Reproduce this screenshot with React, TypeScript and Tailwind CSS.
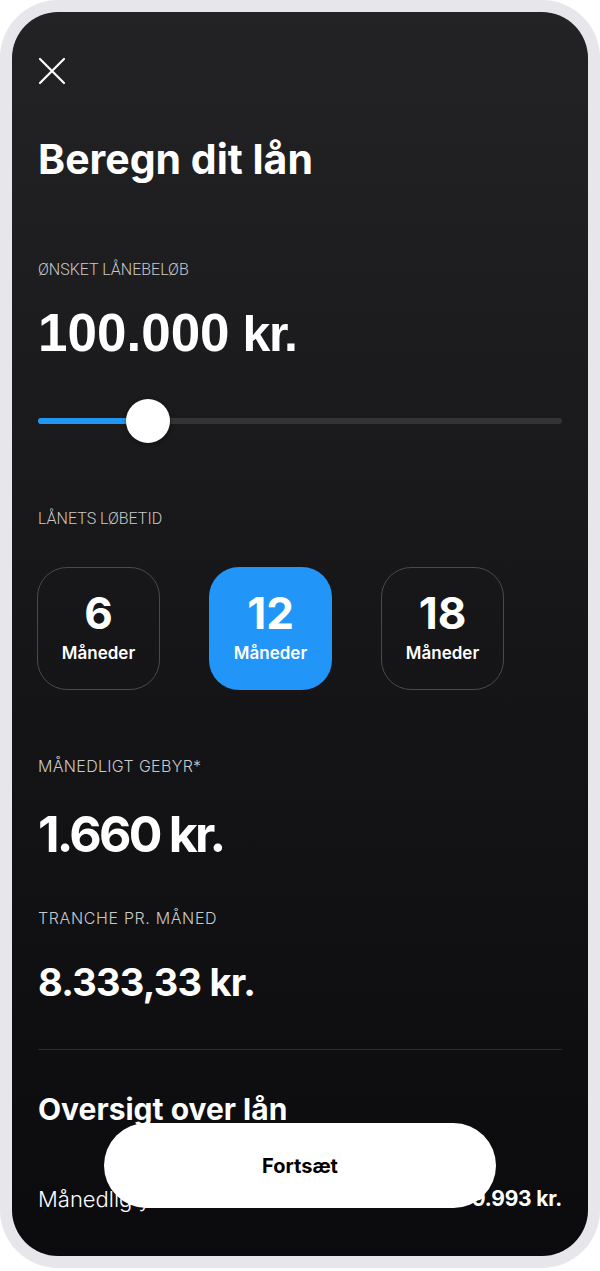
import React, { useState } from "react";

const geo = "font-['Inter',sans-serif]";
const thin = "font-['Roboto','Liberation_Sans',sans-serif]";

function Label({ children, className = "" }: { children: React.ReactNode; className?: string }) {
  return (
    <div className={`text-[16px] leading-[20px] font-light text-[#c9c9cc] ${className}`}>
      {children}
    </div>
  );
}

export default function App() {
  const [months, setMonths] = useState(12);
  const options = [6, 12, 18];

  return (
    <div className={`w-[600px] h-[1271px] bg-white ${geo}`}>
      <div className="w-full h-[1268px] rounded-[58px] bg-[#e6e6eb] p-[12px]">
        <div className="relative h-full overflow-hidden rounded-[46px] bg-gradient-to-b from-[#232325] via-[#161618] to-[#0b0b0d] text-white">
          <div className="px-[26px] pt-[44px]">
            {/* close */}
            <button className="block h-[30px] w-[30px] -ml-[1px]">
              <svg viewBox="0 0 30 30" className="h-[30px] w-[30px]" fill="none" stroke="white" strokeWidth="2.2" strokeLinecap="round">
                <path d="M3 3 L27 27 M27 3 L3 27" />
              </svg>
            </button>

            <h1 className="mt-[49px] text-[41px] leading-[48px] font-bold">Beregn dit lån</h1>

            <Label className={`mt-[77px] ${thin}`}>ØNSKET LÅNEBELØB</Label>
            <div className="mt-[24px] flex items-baseline font-['Liberation_Sans','Arial',sans-serif] text-[53px] leading-[58px] font-bold">
              <span>100.000</span>
              <span className="ml-[13px] text-[50px] tracking-[-0.03em]">kr.</span>
            </div>

            {/* slider */}
            <div className="relative mt-[36px] h-[44px] flex items-center">
              <div className="h-[6px] w-full rounded-full bg-[#333336]" />
              <div className="absolute left-0 top-[19px] h-[6px] w-[100px] rounded-l-full bg-[#2196f3]" />
              <div className="absolute left-[88px] top-0 h-[44px] w-[44px] rounded-full bg-white shadow-[0_1px_4px_rgba(0,0,0,0.4)]" />
            </div>

            <Label className={`mt-[66px] ${thin}`}>LÅNETS LØBETID</Label>

            <div className="mt-[38px] -ml-[1px] flex gap-[49px]">
              {options.map((m) => {
                const active = m === months;
                return (
                  <button
                    key={m}
                    onClick={() => setMonths(m)}
                    className={`flex h-[123px] w-[123px] flex-col items-center justify-center rounded-[30px] ${
                      active ? "bg-[#2196f8]" : "border border-[#4a4a4d]"
                    }`}
                  >
                    <span className="text-[44px] leading-[46px] font-bold -mt-[4px]">{m}</span>
                    <span className="text-[17px] leading-[22px] font-semibold mt-[6px]">Måneder</span>
                  </button>
                );
              })}
            </div>

            <Label className="mt-[66px] tracking-[0.02em]">MÅNEDLIGT GEBYR*</Label>
            <div className="mt-[30px] text-[50px] leading-[56px] font-bold tracking-[-0.055em]">1.660 kr.</div>

            <Label className="mt-[46px] tracking-[0.04em]">TRANCHE PR. MÅNED</Label>
            <div className="mt-[31px] text-[38px] leading-[46px] font-bold tracking-[-0.02em]">8.333,33 kr.</div>

            <div className="mt-[44px] h-px w-full bg-[#2c2c2f]" />

            <h2 className="mt-[42px] text-[30px] leading-[34px] font-bold">Oversigt over lån</h2>

            <div className="mt-[59px] flex items-center justify-between">
              <span className="text-[22px] leading-[28px] font-light">Månedlig ydelse i alt</span>
              <span className="text-[21px] leading-[28px] font-bold tracking-[-0.01em]">9.993 kr.</span>
            </div>
          </div>

          {/* sticky action */}
          <div className="absolute inset-x-0 top-[1111px] flex justify-center">
            <button className="h-[85px] w-[392px] rounded-full bg-white text-[20px] font-bold text-black">
              Fortsæt
            </button>
          </div>
        </div>
      </div>
    </div>
  );
}
